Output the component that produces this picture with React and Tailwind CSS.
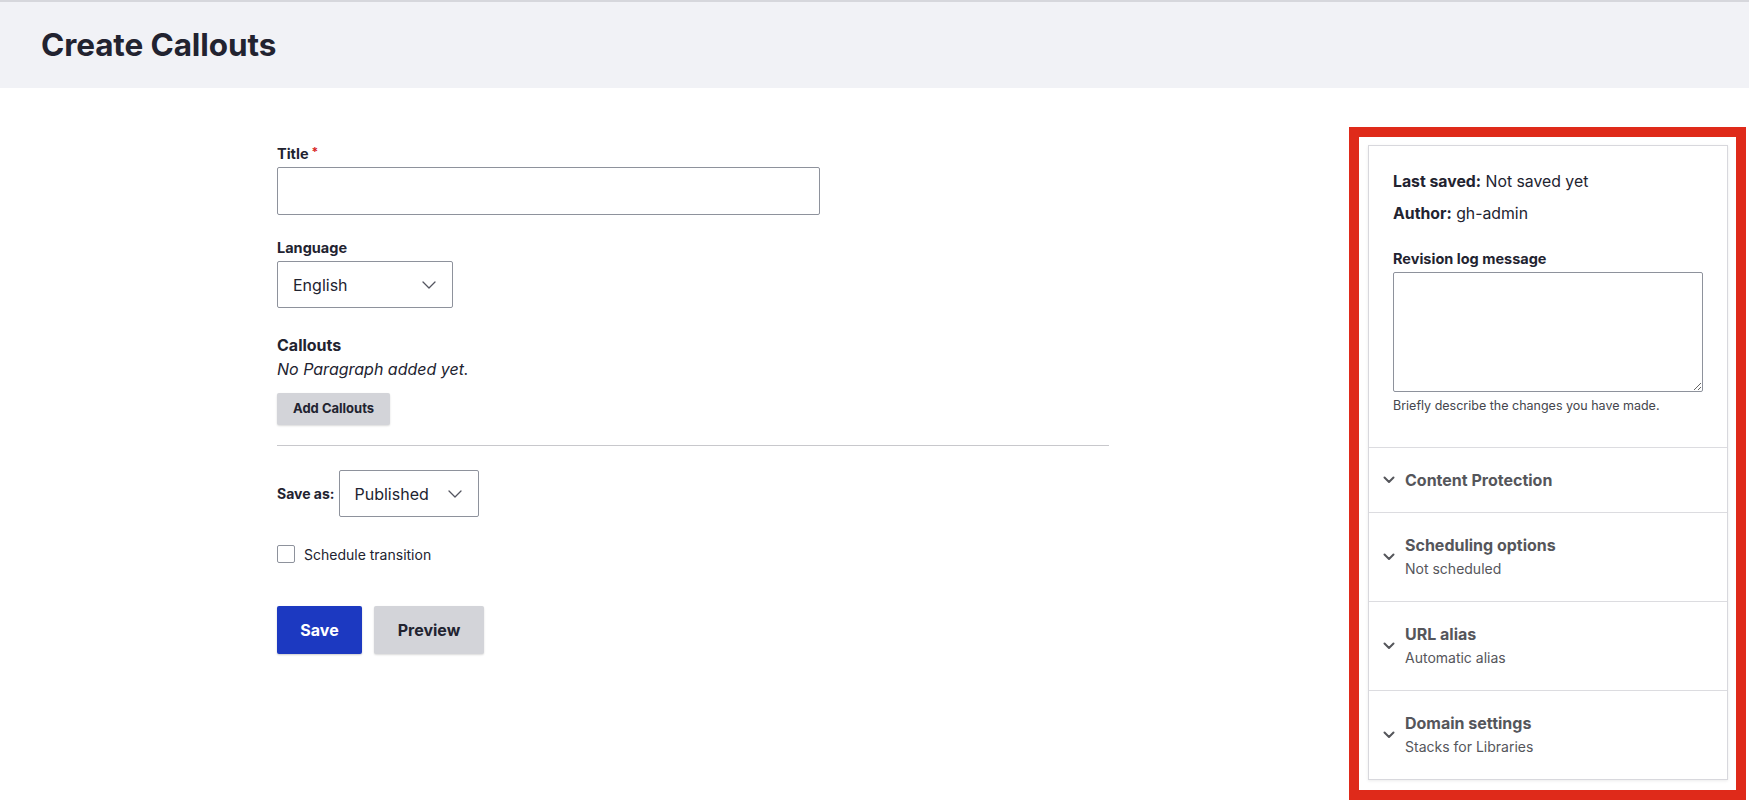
import React from 'react';

const Chevron = ({ className = '' }) => (
  <svg viewBox="0 0 14 8" className={className} fill="none" stroke="currentColor" strokeWidth="1.3" strokeLinecap="round" strokeLinejoin="round">
    <path d="M1 1l6 6 6-6" />
  </svg>
);

const AccordionChevron = () => (
  <svg viewBox="0 0 12 8" className="w-[12px] h-[8px] shrink-0 text-[#55565b]" fill="none" stroke="currentColor" strokeWidth="2" strokeLinecap="round" strokeLinejoin="round">
    <path d="M1.5 1.5l4.5 4.5 4.5-4.5" />
  </svg>
);

const Select = ({ value, width }) => (
  <div className={`flex items-center justify-between h-[47px] border border-[#8e929c] rounded-[2px] bg-white pl-[15px] pr-[16px] ${width}`}>
    <span className="text-[16px] text-[#222330]">{value}</span>
    <Chevron className="w-[14px] h-[8px] text-[#545560]" />
  </div>
);

const AccordionRow = ({ title, sub }) => (
  <div className="flex items-center border-t border-[#dcdce0] pl-[14px] pt-[22px] pb-[22px]">
    <AccordionChevron />
    <div className="ml-[10px]">
      <div className="text-[16px] leading-5 font-bold text-[#55565b]">{title}</div>
      {sub && <div className="mt-[4px] text-[14px] leading-5 text-[#55565b]">{sub}</div>}
    </div>
  </div>
);

export default function App() {
  return (
    <div className="min-h-[800px] bg-white text-[#222330] font-['Inter','Noto_Sans',sans-serif]">
      {/* Page header */}
      <div className="h-[88px] flex items-center bg-[#f1f2f6] border-t-2 border-[#d6d7dc] pl-[41px]">
        <h1 className="text-[31.5px] font-bold tracking-[-0.1px] text-[#222330]">Create Callouts</h1>
      </div>

      <div className="flex">
        {/* Main form */}
        <div className="pl-[277px] pt-[57px]">
          <label className="flex items-start text-[14.5px] leading-[18px] font-bold">
            Title<span className="ml-[3px] text-[#d72222] text-[12px] leading-[14px]">*</span>
          </label>
          <div className="mt-[4px] w-[543px] h-[48px] border border-[#8e929c] rounded-[2px]" />

          <div className="mt-[24px] text-[14.5px] leading-[18px] font-bold">Language</div>
          <div className="mt-[4px]">
            <Select value="English" width="w-[176px]" />
          </div>

          <div className="mt-[27px] text-[16px] leading-5 font-bold">Callouts</div>
          <div className="mt-[2px] text-[16px] leading-6 italic">No Paragraph added yet.</div>
          <button className="mt-[12px] h-[32px] px-[16px] bg-[#d3d4d9] rounded-[2px] shadow-[0_1px_2px_rgba(0,0,0,0.15)] text-[13px] font-bold text-[#222330]">
            Add Callouts
          </button>

          <div className="mt-[20px] w-[832px] border-t border-[#c8c8cc]" />

          <div className="mt-[24px] flex items-center">
            <span className="text-[14px] font-bold mr-[4px]">Save as:</span>
            <Select value="Published" width="w-[140px]" />
          </div>

          <div className="mt-[28px] flex items-center h-[18px]">
            <div className="w-[18px] h-[18px] border border-[#8e929c] rounded-[2px]" />
            <span className="ml-[9px] text-[14px] text-[#222330]">Schedule transition</span>
          </div>

          <div className="mt-[43px] flex gap-[12px]">
            <button className="h-[48px] w-[85px] bg-[#1c39c1] rounded-[2px] shadow-[0_1px_2px_rgba(0,0,0,0.2)] text-white text-[16px] font-bold">
              Save
            </button>
            <button className="h-[48px] w-[110px] bg-[#d3d4d9] rounded-[2px] shadow-[0_1px_2px_rgba(0,0,0,0.15)] text-[#222330] text-[16px] font-bold">
              Preview
            </button>
          </div>
        </div>

        {/* Sidebar (highlighted) */}
        <div className="ml-auto mr-[3px] mt-[39px] w-[397px] border-[10px] border-[#df2a1a] pl-[9px] pr-[8px] pt-[8px] pb-[10px]">
          <div className="border border-[#d8d8dd] shadow-[0_1px_3px_rgba(0,0,0,0.08)] bg-white">
            <div className="px-[24px] pt-[24px] pb-[33px]">
              <div className="text-[15.8px] leading-6"><span className="font-bold">Last saved:</span> Not saved yet</div>
              <div className="mt-[8px] text-[15.8px] leading-6"><span className="font-bold">Author:</span> gh-admin</div>
              <div className="mt-[24px] text-[14.5px] leading-[18px] font-bold">Revision log message</div>
              <textarea className="mt-[4px] block w-full h-[120px] border border-[#8e929c] rounded-[2px]" />
              <div className="mt-[6px] text-[12.5px] leading-4 text-[#45464d]">Briefly describe the changes you have made.</div>
            </div>
            <AccordionRow title="Content Protection" />
            <AccordionRow title="Scheduling options" sub="Not scheduled" />
            <AccordionRow title="URL alias" sub="Automatic alias" />
            <AccordionRow title="Domain settings" sub="Stacks for Libraries" />
          </div>
        </div>
      </div>
    </div>
  );
}
